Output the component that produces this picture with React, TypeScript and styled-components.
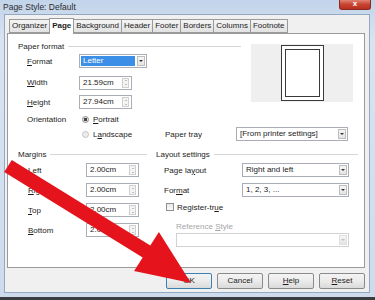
import * as React from 'react'
import styled, { createGlobalStyle } from 'styled-components'

const Global = createGlobalStyle`
  html, body {
    margin: 0;
    padding: 0;
    background: #3a3c3f;
  }
  body {
    width: 375px;
    height: 300px;
    overflow: hidden;
    font-family: "Liberation Sans", "DejaVu Sans", sans-serif;
    color: #1c1c1c;
  }
`

const Window = styled.div`
  position: relative;
  width: 375px;
  height: 297px;
  box-sizing: border-box;
  padding: 0 5px 4px 4px;
  display: flex;
  flex-direction: column;
  background: linear-gradient(#c2d4ea, #d8e4f2 40px, #cddbec);
`

const TitleBar = styled.div`
  height: 14px;
  display: flex;
  align-items: flex-start;
  margin-left: -1px;
`

const Title = styled.div`
  font-size: 8.5px;
  line-height: 14px;
  color: #2b2b2b;
`

const CloseBtn = styled.div`
  margin-left: auto;
  margin-right: -1px;
  width: 32px;
  height: 10px;
  box-sizing: border-box;
  border: 1px solid #8b2a22;
  border-top: 0;
  border-radius: 0 0 3px 3px;
  background: linear-gradient(#e08373, #c7432f 50%, #b8301e);
  color: #fff;
  font-size: 8px;
  line-height: 8px;
  text-align: center;
  font-weight: bold;
`

const Client = styled.div`
  flex: 1;
  box-sizing: border-box;
  border: 1px solid #95a8c1;
  background: #f0f0f0;
  padding: 4px 4px 0 1px;
  display: flex;
  flex-direction: column;
`

const TabRow = styled.div`
  display: flex;
  padding-left: 3px;
  height: 14px;
  align-items: flex-end;
`

const Tab = styled.div<{ $active?: boolean }>`
  box-sizing: border-box;
  height: ${p => (p.$active ? 16 : 14)}px;
  margin-right: -1px;
  margin-bottom: ${p => (p.$active ? -1 : 0)}px;
  padding: 0 2px;
  border: 1px solid #9a9a9a;
  border-bottom: ${p => (p.$active ? 0 : '1px solid #9a9a9a')};
  background: ${p => (p.$active ? '#fff' : 'linear-gradient(#f4f4f4, #e2e2e2)')};
  font-size: 8px;
  line-height: ${p => (p.$active ? 14 : 12)}px;
  font-weight: ${p => (p.$active ? 'bold' : 'normal')};
  position: relative;
  z-index: ${p => (p.$active ? 2 : 1)};
`

const Panel = styled.div`
  box-sizing: border-box;
  height: 235px;
  margin-left: 1px;
  border: 1px solid #9a9a9a;
  background: #fff;
  padding: 7px 0 0 10px;
  display: flex;
  flex-direction: column;
`

const SectionHead = styled.div<{ $w: number }>`
  width: ${p => p.$w}px;
  height: 10px;
  display: flex;
  align-items: center;
  font-size: 8px;
  &::after {
    content: '';
    flex: 1;
    height: 1px;
    margin-left: 4px;
    background: #d6d6d6;
  }
`

const Section = styled.div`
  display: flex;
  align-items: flex-start;
`

const Col = styled.div<{ $w?: number; $ml?: number }>`
  display: flex;
  flex-direction: column;
  width: ${p => (p.$w ? `${p.$w}px` : 'auto')};
  margin-left: ${p => p.$ml || 0}px;
`

const Row = styled.div<{ $mt: number; $h?: number; $indent?: number }>`
  display: flex;
  align-items: center;
  margin-top: ${p => p.$mt}px;
  padding-left: ${p => p.$indent || 0}px;
  height: ${p => p.$h || 14}px;
`

const Label = styled.div<{ $indent: number; $w: number; $disabled?: boolean }>`
  margin-left: ${p => p.$indent}px;
  width: ${p => p.$w}px;
  flex-shrink: 0;
  font-size: 8px;
  color: ${p => (p.$disabled ? '#a6a6a6' : '#1c1c1c')};
  white-space: nowrap;
`

const Key = styled.span`
  text-decoration: underline;
`

const Preview = styled.div`
  margin-left: 10px;
  margin-top: 3px;
  width: 102px;
  height: 58px;
  background: #efefef;
  display: flex;
  align-items: center;
  justify-content: center;
`

const PageOuter = styled.div`
  width: 43px;
  height: 56px;
  box-sizing: border-box;
  border: 1px solid #3a3a3a;
  background: #fff;
  padding: 3px;
`

const PageInner = styled.div`
  height: 100%;
  box-sizing: border-box;
  border: 1px solid #3a3a3a;
`

const Field = styled.div<{ $w: number; $disabled?: boolean }>`
  width: ${p => p.$w}px;
  height: 14px;
  box-sizing: border-box;
  border: 1px solid ${p => (p.$disabled ? '#d2d2d2' : '#a9adb5')};
  background: #fff;
  display: flex;
  align-items: stretch;
  font-size: 8px;
`

const FieldText = styled.div<{ $selected?: boolean }>`
  flex: 1;
  margin: 1px;
  padding-left: 2px;
  line-height: 10px;
  white-space: nowrap;
  overflow: hidden;
  background: ${p => (p.$selected ? '#3b8fe6' : 'transparent')};
  color: ${p => (p.$selected ? '#fff' : '#1c1c1c')};
`

const DropBtn = styled.div<{ $disabled?: boolean }>`
  width: 8px;
  margin: 1px;
  box-sizing: border-box;
  border: 1px solid ${p => (p.$disabled ? '#e0e0e0' : '#bdbdbd')};
  background: linear-gradient(#f6f6f6, #e4e4e4);
  display: flex;
  align-items: center;
  justify-content: center;
  &::after {
    content: '';
    border-left: 2px solid transparent;
    border-right: 2px solid transparent;
    border-top: 2px solid ${p => (p.$disabled ? '#c0c0c0' : '#333')};
  }
`

const Spinner = styled.div`
  width: 7px;
  margin: 1px 2px 1px 1px;
  box-sizing: border-box;
  border: 1px solid #cfcfcf;
  background: #f4f4f4;
  display: flex;
  flex-direction: column;
  align-items: center;
  justify-content: space-around;
`

const SpinArrow = styled.div<{ $down?: boolean }>`
  border-left: 1.5px solid transparent;
  border-right: 1.5px solid transparent;
  ${p => (p.$down ? 'border-top' : 'border-bottom')}: 1.5px solid #8a8a8a;
`

const Radio = styled.div<{ $checked?: boolean }>`
  width: 7px;
  height: 7px;
  box-sizing: border-box;
  border-radius: 50%;
  border: 1px solid ${p => (p.$checked ? '#8d8d8d' : '#c4c4c4')};
  background: ${p => (p.$checked ? 'radial-gradient(#444 0 1.6px, #e8e8e8 2px)' : '#ececec')};
  margin-right: 4px;
  flex-shrink: 0;
`

const Check = styled.div`
  margin-left: 10px;
  width: 8px;
  height: 8px;
  box-sizing: border-box;
  border: 1px solid #8e8f8f;
  background: linear-gradient(#e8e8e8, #fafafa);
  margin-right: 3px;
`

const Text = styled.div<{ $w?: number }>`
  font-size: 8px;
  white-space: nowrap;
  width: ${p => (p.$w ? `${p.$w}px` : 'auto')};
  flex-shrink: 0;
`

const ButtonRow = styled.div`
  display: flex;
  justify-content: flex-end;
  gap: 5px;
  margin-top: 5px;
`

const Button = styled.div<{ $default?: boolean }>`
  width: 46px;
  height: 16px;
  box-sizing: border-box;
  border: 1px solid ${p => (p.$default ? '#3c7fb1' : '#8a8a8a')};
  border-radius: 2px;
  background: linear-gradient(#f4f4f4, #ebebeb 50%, #dadada);
  font-size: 8px;
  line-height: 14px;
  text-align: center;
`

const Arrow = styled.svg`
  position: absolute;
  left: 0;
  top: 0;
  pointer-events: none;
`

function Combo(props: { w: number; text: string; selected?: boolean; disabled?: boolean }) {
  return (
    <Field $w={props.w} $disabled={props.disabled}>
      <FieldText $selected={props.selected}>{props.text}</FieldText>
      <DropBtn $disabled={props.disabled} />
    </Field>
  )
}

function Spin(props: { w: number; text: string }) {
  return (
    <Field $w={props.w}>
      <FieldText>{props.text}</FieldText>
      <Spinner>
        <SpinArrow />
        <SpinArrow $down />
      </Spinner>
    </Field>
  )
}

const tabs = ['Organizer', 'Page', 'Background', 'Header', 'Footer', 'Borders', 'Columns', 'Footnote']

const margins: Array<[string, string, number]> = [
  ['L', 'eft', 4],
  ['R', 'ight', 6],
  ['T', 'op', 6],
  ['B', 'ottom', 6],
]

export default function App() {
  return (
    <>
      <Global />
      <Window>
        <TitleBar>
          <Title>Page Style: Default</Title>
          <CloseBtn>x</CloseBtn>
        </TitleBar>
        <Client>
          <TabRow>
            {tabs.map(t => (
              <Tab key={t} $active={t === 'Page'}>
                {t}
              </Tab>
            ))}
          </TabRow>
          <Panel>
            <Section>
              <Col $w={223}>
                <SectionHead $w={223}>Paper format</SectionHead>
                <Row $mt={3}>
                  <Label $indent={9} $w={52}>
                    <Key>F</Key>ormat
                  </Label>
                  <Combo w={68} text="Letter" selected />
                </Row>
                <Row $mt={7} $h={15}>
                  <Label $indent={9} $w={52}>
                    <Key>W</Key>idth
                  </Label>
                  <Spin w={53} text="21.59cm" />
                </Row>
                <Row $mt={5}>
                  <Label $indent={9} $w={52}>
                    <Key>H</Key>eight
                  </Label>
                  <Spin w={53} text="27.94cm" />
                </Row>
              </Col>
              <Preview>
                <PageOuter>
                  <PageInner />
                </PageOuter>
              </Preview>
            </Section>
            <Row $mt={3}>
              <Label $indent={9} $w={55}>
                Orientation
              </Label>
              <Radio $checked />
              <Text>
                <Key>P</Key>ortrait
              </Text>
            </Row>
            <Row $mt={1} $indent={64}>
              <Radio />
              <Text $w={72}>
                L<Key>a</Key>ndscape
              </Text>
              <Label $indent={0} $w={71}>
                Paper tray
              </Label>
              <Combo w={112} text="[From printer settings]" />
            </Row>
            <Section>
              <Col $w={129}>
                <Row $mt={8} $h={10}>
                  <SectionHead $w={129}>Margins</SectionHead>
                </Row>
                {margins.map(([k, rest, mt]) => (
                  <Row key={k} $mt={mt}>
                    <Label $indent={10} $w={58}>
                      <Key>{k}</Key>
                      {rest}
                    </Label>
                    <Spin w={53} text="2.00cm" />
                  </Row>
                ))}
              </Col>
              <Col $w={202} $ml={9}>
                <Row $mt={8} $h={10}>
                  <SectionHead $w={202}>Layout settings</SectionHead>
                </Row>
                <Row $mt={4}>
                  <Label $indent={8} $w={78}>
                    Page la<Key>y</Key>out
                  </Label>
                  <Combo w={107} text="Right and left" />
                </Row>
                <Row $mt={6}>
                  <Label $indent={8} $w={78}>
                    For<Key>m</Key>at
                  </Label>
                  <Combo w={107} text="1, 2, 3, ..." />
                </Row>
                <Row $mt={4} $h={12}>
                  <Check />
                  <Text>
                    Register-tr<Key>u</Key>e
                  </Text>
                </Row>
                <Row $mt={8} $h={10}>
                  <Label $indent={20} $w={100} $disabled>
                    Reference <Key>S</Key>tyle
                  </Label>
                </Row>
                <Row $mt={2} $indent={20}>
                  <Combo w={173} text="" disabled />
                </Row>
              </Col>
            </Section>
          </Panel>
          <ButtonRow>
            <Button $default>OK</Button>
            <Button>Cancel</Button>
            <Button>
              <Key>H</Key>elp
            </Button>
            <Button>
              <Key>R</Key>eset
            </Button>
          </ButtonRow>
        </Client>
        <Arrow width="375" height="297" viewBox="0 0 375 297">
          <polygon
            points="11.8,160.1 150.3,245.6 158.9,232.1 191,283 134.1,270.9 142.7,257.4 4.2,171.9"
            fill="#e5141c"
          />
        </Arrow>
      </Window>
    </>
  )
}
